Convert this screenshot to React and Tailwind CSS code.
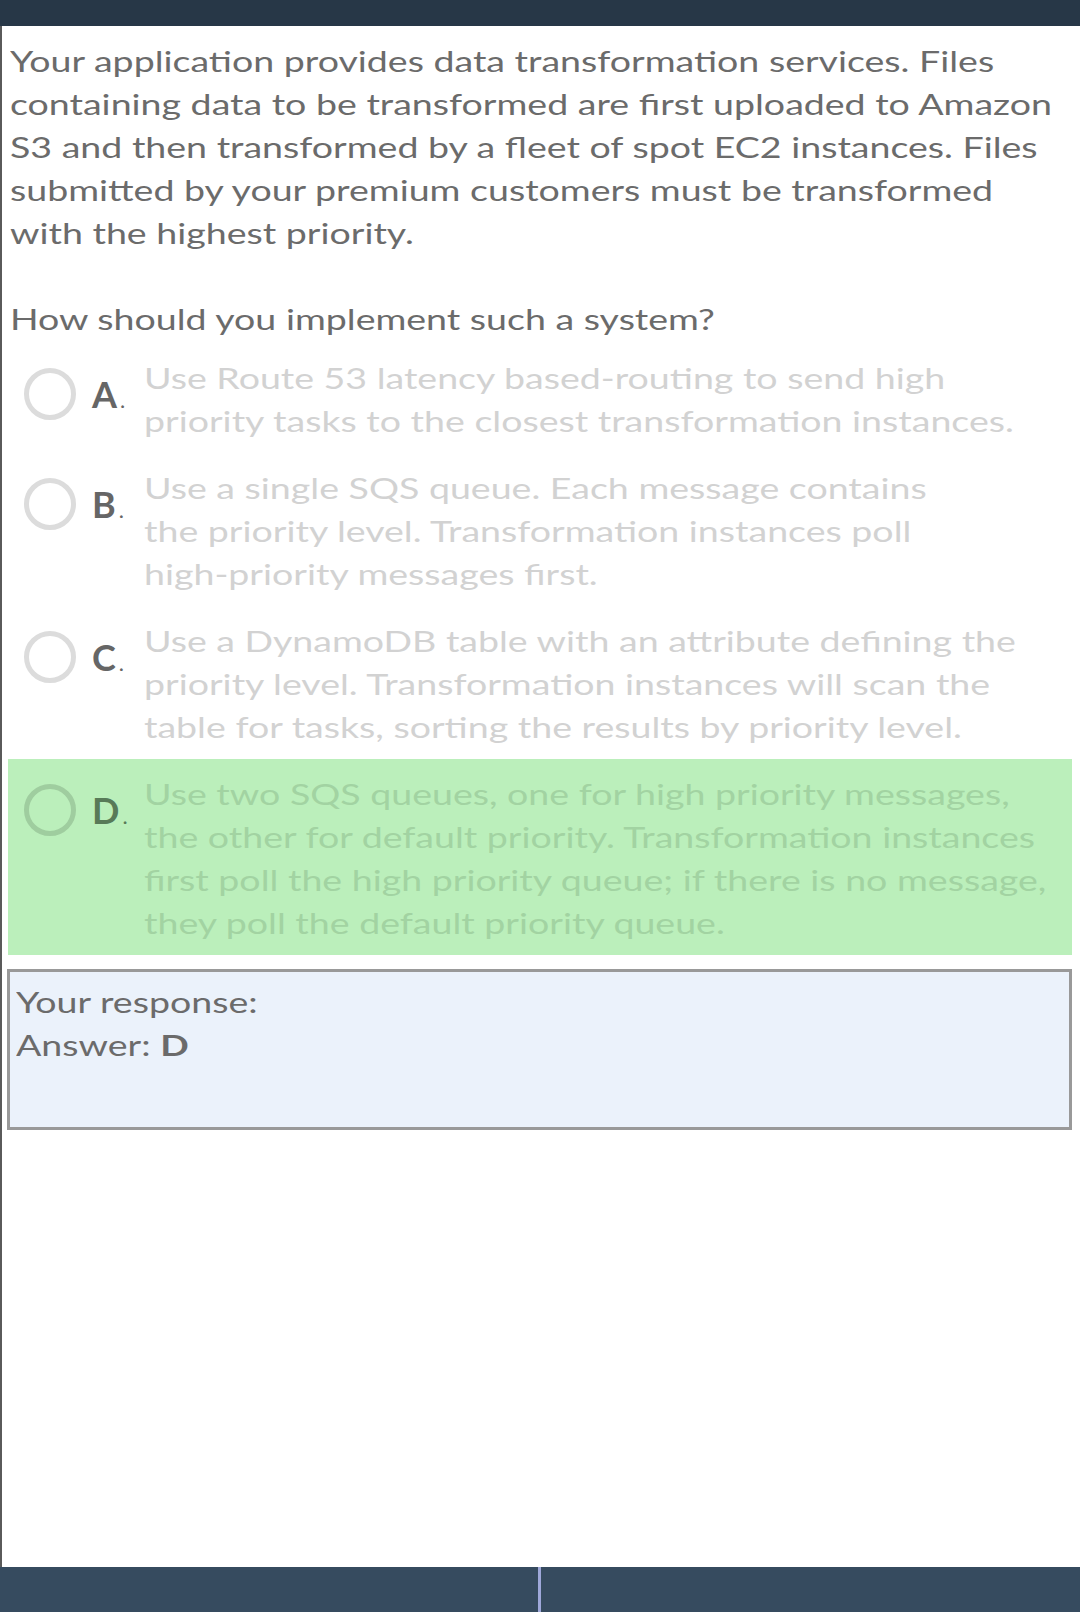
import React from 'react'

const question = [
    'Your application provides data transformation services. Files',
    'containing data to be transformed are first uploaded to Amazon',
    'S3 and then transformed by a fleet of spot EC2 instances. Files',
    'submitted by your premium customers must be transformed',
    'with the highest priority.',
]

const options = [
    {
        key: 'A',
        lines: [
            'Use Route 53 latency based-routing to send high',
            'priority tasks to the closest transformation instances.',
        ],
    },
    {
        key: 'B',
        lines: [
            'Use a single SQS queue. Each message contains',
            'the priority level. Transformation instances poll',
            'high-priority messages first.',
        ],
    },
    {
        key: 'C',
        lines: [
            'Use a DynamoDB table with an attribute defining the',
            'priority level. Transformation instances will scan the',
            'table for tasks, sorting the results by priority level.',
        ],
    },
    {
        key: 'D',
        correct: true,
        lines: [
            'Use two SQS queues, one for high priority messages,',
            'the other for default priority. Transformation instances',
            'first poll the high priority queue; if there is no message,',
            'they poll the default priority queue.',
        ],
    },
]

// the text in the shot is drawn wider than Lato's natural width
const Line = ({ children }) => (
    <div className="whitespace-nowrap origin-left scale-x-[1.34]">{children}</div>
)

function Option({ opt }) {
    const ok = opt.correct
    return (
        <div className={`flex items-start pl-4 ${ok ? 'bg-[#bbefbb] -mt-[2px] pt-[14px] pb-[10px]' : 'py-3'}`}>
            <div className={`mt-[11px] w-[52px] h-[52px] shrink-0 rounded-full border-[5px] ${ok ? 'border-[#9fcd9f]' : 'border-[#dcdcdc]'}`}></div>
            <div className={`mt-[11px] ml-4 w-[52px] shrink-0 h-[52px] leading-[52px] whitespace-nowrap ${ok ? 'text-[#587a58]' : 'text-[#666666]'}`}>
                <span className="text-[36px] font-bold">{opt.key}</span>
                <span className="ml-[3px] text-[22px]">.</span>
            </div>
            <div className={`text-[28px] leading-[43px] ${ok ? 'text-[#a2d3a2]' : 'text-[#d2d2d2]'}`}>
                {opt.lines.map((l, i) => <Line key={i}>{l}</Line>)}
            </div>
        </div>
    )
}

export default function App() {
    return (
        <div className="w-[1080px] h-[1612px] flex flex-col bg-white overflow-hidden" style={{ fontFamily: 'Lato, "Noto Sans", sans-serif' }}>
            <div className="h-[26px] shrink-0 bg-[#273747]"></div>

            <div className="flex-1 min-h-0 border-l-2 border-[#5a5a5a] pt-[14px] pl-[6px] pr-[8px]">
                <div className="pl-[2px] text-[28px] leading-[43px] text-[#6b6b6b]">
                    {question.map((l, i) => <Line key={i}>{l}</Line>)}
                    <div className="h-[43px]"></div>
                    <Line>How should you implement such a system?</Line>
                </div>

                <div className="mt-[4px] flex flex-col">
                    {options.map(o => <Option key={o.key} opt={o} />)}
                </div>

                <div className="mt-[14px] -ml-px border-[3px] border-[#999999] bg-[#ebf2fb] pl-[6px] pt-[9px] pb-[60px] text-[28px] leading-[43px] text-[#6b6b6b]">
                    <Line>Your response:</Line>
                    <Line>Answer: <span className="font-bold">D</span></Line>
                </div>
            </div>

            <div className="h-[45px] shrink-0 bg-[#364b5f] flex">
                <div className="w-[538px]"></div>
                <div className="w-[3px] bg-[#9fa8da]"></div>
            </div>
        </div>
    )
}
